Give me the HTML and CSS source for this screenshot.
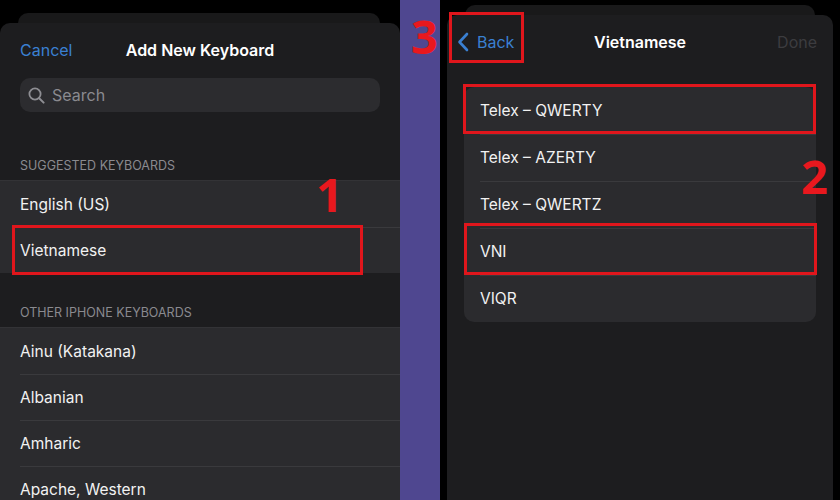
FILE: index.html
```html
<!DOCTYPE html>
<html lang="en">
<head>
  <meta charset="UTF-8">
  <meta name="viewport" content="width=device-width, initial-scale=1.0">
  <title>Add Vietnamese Keyboard</title>
  <link rel="stylesheet" href="styles.css">
</head>
<body>
  <div class="screens">
    <!-- step 1: pick the keyboard -->
    <div class="panel panel-left">
      <div class="back-card"></div>
      <div class="sheet">
        <div class="nav">
          <span class="nav-link">Cancel</span>
          <span class="nav-title">Add New Keyboard</span>
        </div>
        <div class="search">
          <svg width="17" height="17" viewBox="0 0 17 17">
            <circle cx="7" cy="7" r="5.6" fill="none" stroke="#8e8e93" stroke-width="1.8"/>
            <line x1="11.2" y1="11.2" x2="15.6" y2="15.6" stroke="#8e8e93" stroke-width="2" stroke-linecap="round"/>
          </svg>
          <span>Search</span>
        </div>

        <div class="section-head first">SUGGESTED KEYBOARDS</div>
        <div class="list">
          <div class="row">English (US)</div>
          <div class="row">Vietnamese<span class="mark mark-1"></span></div>
          <span class="step step-1">1</span>
        </div>

        <div class="section-head">OTHER IPHONE KEYBOARDS</div>
        <div class="list">
          <div class="row">Ainu (Katakana)</div>
          <div class="row">Albanian</div>
          <div class="row">Amharic</div>
          <div class="row">Apache, Western</div>
        </div>
      </div>
    </div>

    <div class="divider">
      <span class="step step-3">3</span>
    </div>

    <!-- step 2: choose the layout -->
    <div class="panel panel-right">
      <div class="back-card"></div>
      <div class="sheet">
        <div class="nav nav-split">
          <span class="nav-link back">
            <svg width="12" height="20" viewBox="0 0 12 20">
              <path d="M10 2 L2.5 10 L10 18" fill="none" stroke="#3a80d2" stroke-width="2.6" stroke-linecap="round" stroke-linejoin="round"/>
            </svg>
            Back
          </span>
          <span class="nav-title">Vietnamese</span>
          <span class="nav-done">Done</span>
          <span class="mark mark-3"></span>
        </div>
        <div class="inset-list">
          <div class="row">Telex – QWERTY<span class="mark mark-2a"></span></div>
          <div class="row">Telex – AZERTY</div>
          <div class="row">Telex – QWERTZ</div>
          <div class="row">VNI<span class="mark mark-2b"></span></div>
          <div class="row">VIQR</div>
        </div>
        <span class="step step-2">2</span>
      </div>
    </div>
  </div>
</body>
</html>
```

FILE: styles.css
```css
body {
  margin: 0;
  padding: 0;
  background-color: #000;
  font-family: 'Inter', 'Liberation Sans', sans-serif;
  color: #fff;
  overflow: hidden;
}

.screens {
  display: flex;
  width: 840px;
  height: 500px;
}

.panel {
  display: flex;
  flex-direction: column;
  width: 400px;
  background-color: #000;
}

.divider {
  position: relative;
  width: 40px;
  background-color: #4f4790;
}

.back-card {
  flex-shrink: 0;
  height: 10px;
  background-color: #19191a;
  border-radius: 10px 10px 0 0;
}

.sheet {
  position: relative;
  flex: 1 0 auto;
  background-color: #1d1d1f;
  border-radius: 10px 10px 0 0;
}

/* left screen */
.panel-left {
  padding-top: 13px;
}

.panel-left .back-card {
  margin: 0 20px 0 18px;
}

.nav {
  position: relative;
  display: flex;
  align-items: center;
  height: 22px;
  margin-top: 16px;
  padding: 0 20px;
  font-size: 16px;
}

.nav-link {
  color: #3a80d2;
}

.nav-title {
  position: absolute;
  left: 0;
  right: 0;
  text-align: center;
  font-weight: 600;
  pointer-events: none;
}

.search {
  display: flex;
  align-items: center;
  gap: 7px;
  height: 34px;
  margin: 17px 20px 0;
  padding: 0 8px;
  background-color: #2c2c2f;
  border-radius: 10px;
  color: #8a8a8f;
  font-size: 16px;
}

.section-head {
  padding: 32px 20px 6px;
  line-height: 16px;
  font-size: 12.5px;
  color: #8a8a8f;
}

.section-head.first {
  padding-top: 46px;
}

.list {
  position: relative;
  background-color: #2b2b2e;
  border-top: 1px solid #333336;
}

.row {
  position: relative;
  display: flex;
  align-items: center;
  height: 46px;
  padding-left: 20px;
  font-size: 15.5px;
  color: #f2f2f2;
}

.row + .row::before {
  content: "";
  position: absolute;
  top: 0;
  left: 20px;
  right: 0;
  border-top: 1px solid #3a3a3d;
}

/* right screen */
.panel-right {
  padding-top: 5px;
}

.panel-right .back-card {
  margin: 0 25px;
}

.panel-right .sheet {
  margin: 0 7px;
}

.nav-split {
  justify-content: space-between;
  padding: 0 16px 0 10px;
}

.back {
  display: flex;
  align-items: center;
  gap: 8px;
}

.nav-done {
  color: #3c3c3f;
}

.inset-list {
  margin: 34px 17px 0;
  background-color: #2b2b2e;
  border-radius: 10px;
}

.inset-list .row {
  height: 47px;
  padding-left: 16px;
}

.inset-list .row + .row::before {
  left: 16px;
}

/* red annotations */
.mark {
  position: absolute;
  border: 3.5px solid #e0161c;
  box-sizing: border-box;
}

.mark-1 {
  left: 12px;
  top: -2px;
  width: 351px;
  height: 50px;
}

.mark-2a {
  left: -1px;
  top: -3px;
  width: 353px;
  height: 50px;
}

.mark-2b {
  left: 0;
  top: -5px;
  width: 353px;
  height: 52px;
}

.mark-3 {
  left: 2px;
  top: -19px;
  width: 75px;
  height: 51px;
}

.step {
  position: absolute;
  font-family: 'Open Sans', 'Liberation Sans', sans-serif;
  font-weight: 700;
  font-size: 47px;
  line-height: 46px;
  color: #e8181e;
}

.step-1 {
  left: 316px;
  top: -10px;
}

.step-2 {
  left: 354px;
  top: 138px;
}

.step-3 {
  left: 11px;
  top: 13px;
}
```
